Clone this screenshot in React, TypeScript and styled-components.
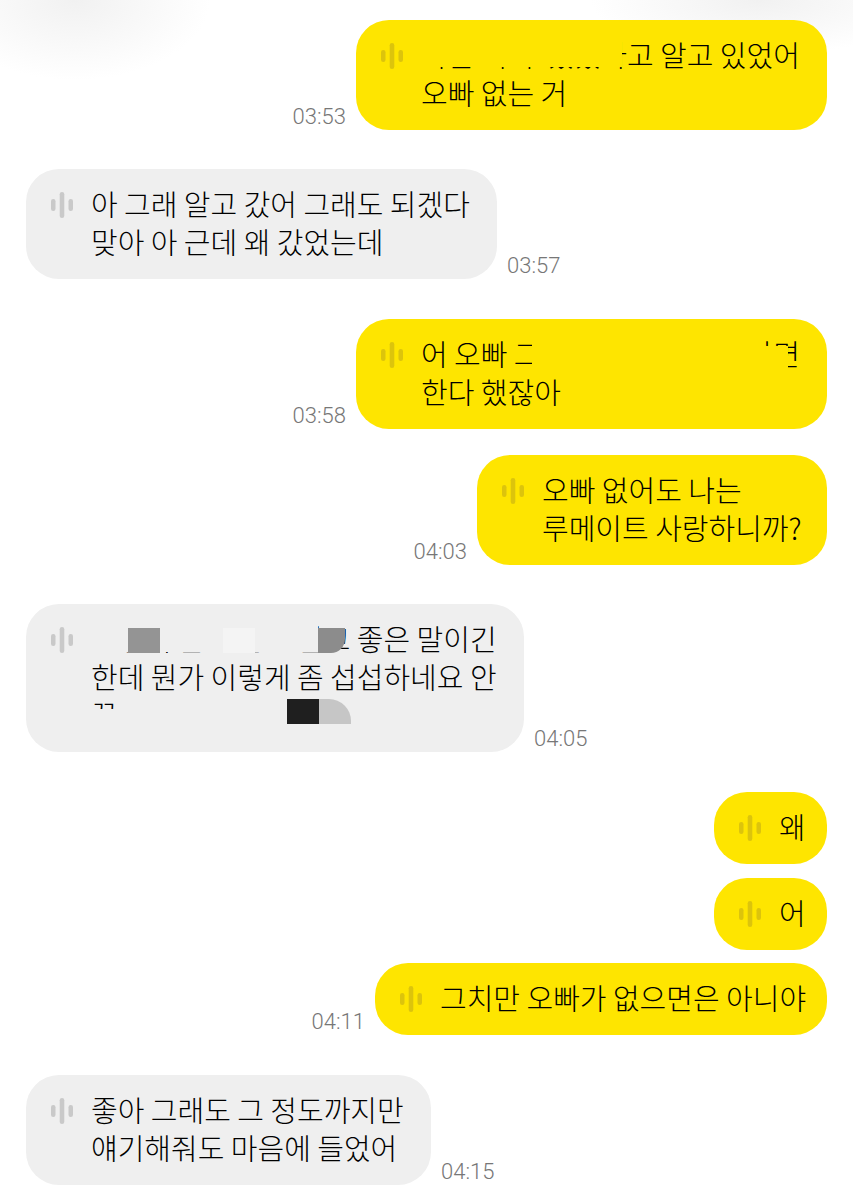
import React from "react";
import styled, { createGlobalStyle } from "styled-components";

const GlobalStyle = createGlobalStyle`
  html, body {
    margin: 0;
    padding: 0;
    background: #fff;
  }
`;

type Cover = {
  left: number;
  top: number;
  width: number;
  height: number;
  color: string;
  radius?: string;
};

type Message = {
  mine: boolean;
  width: number;
  gap: number;
  lines: string[];
  time?: string;
  covers?: Cover[];
};

const YELLOW = "#fee500";
const GRAY = "#efefef";

const messages: Message[] = [
  {
    mine: true,
    width: 471,
    gap: 0,
    lines: ["나는 거기  있었다고 알고 있었어", "오빠 없는 거"],
    time: "03:53",
    covers: [{ left: 62, top: 20, width: 204, height: 27, color: YELLOW }],
  },
  {
    mine: false,
    width: 471,
    gap: 39,
    lines: ["아 그래 알고 갔어 그래도 되겠다", "맞아 아 근데 왜 갔었는데"],
    time: "03:57",
  },
  {
    mine: true,
    width: 471,
    gap: 40,
    lines: ["어 오빠 그때 내가 없어도 된다면", "한다 했잖아"],
    time: "03:58",
    covers: [
      { left: 176, top: 14, width: 232, height: 36, color: YELLOW },
      { left: 408, top: 27, width: 24, height: 23, color: YELLOW },
    ],
  },
  {
    mine: true,
    width: 350,
    gap: 26,
    lines: ["오빠 없어도 나는", "루메이트 사랑하니까?"],
    time: "04:03",
  },
  {
    mine: false,
    width: 498,
    gap: 39,
    lines: ["그렇게 말해 참 고맙고 좋은 말이긴", "한데 뭔가 이렇게 좀 섭섭하네요 안", "꼭 그렇게 말하지 않아도"],
    time: "04:05",
    covers: [
      { left: 60, top: 20, width: 232, height: 28, color: GRAY },
      { left: 60, top: 105, width: 300, height: 34, color: GRAY },
      { left: 92, top: 95, width: 268, height: 44, color: GRAY },
      { left: 102, top: 24, width: 32, height: 25, color: "#949494" },
      { left: 197, top: 24, width: 32, height: 25, color: "#f4f4f4" },
      { left: 292, top: 24, width: 27, height: 25, color: "#8c8c8c", radius: "0 0 14px 0" },
      { left: 261, top: 95, width: 32, height: 25, color: "#1f1f1f" },
      { left: 293, top: 95, width: 32, height: 25, color: "#c6c6c6", radius: "0 22px 0 0" },
    ],
  },
  { mine: true, width: 113, gap: 40, lines: ["왜"] },
  { mine: true, width: 113, gap: 14, lines: ["어"] },
  {
    mine: true,
    width: 452,
    gap: 13,
    lines: ["그치만 오빠가 없으면은 아니야"],
    time: "04:11",
  },
  {
    mine: false,
    width: 405,
    gap: 40,
    lines: ["좋아 그래도 그 정도까지만", "얘기해줘도 마음에 들었어"],
    time: "04:15",
  },
];

const VoiceIcon: React.FC<{ color: string }> = ({ color }) => (
  <IconBox width="22" height="26" viewBox="0 0 22 26" fill={color}>
    <rect x="0" y="7" width="4.5" height="12" rx="2.2" />
    <rect x="8.7" y="0" width="4.6" height="26" rx="2.3" />
    <rect x="17.5" y="7" width="4.5" height="12" rx="2.2" />
  </IconBox>
);

const App: React.FC = () => {
  return (
    <Page>
      <GlobalStyle />
      <Glow $left={-60} $width={270} $height={160} />
      <Glow $left={590} $width={340} $height={110} />
      {messages.map((message, index) => (
        <Row key={index} $mine={message.mine} $gap={message.gap}>
          {message.mine && message.time && <Time>{message.time}</Time>}
          <Bubble $mine={message.mine} $width={message.width}>
            <VoiceIcon color={message.mine ? "#dcc40c" : "#c9c9c9"} />
            <TextBlock>
              {message.lines.map((line) => (
                <Line key={line}>{line}</Line>
              ))}
            </TextBlock>
            {message.covers?.map((cover, i) => (
              <Patch
                key={i}
                $left={cover.left}
                $top={cover.top}
                $width={cover.width}
                $height={cover.height}
                $color={cover.color}
                $radius={cover.radius}
              />
            ))}
          </Bubble>
          {!message.mine && message.time && <Time>{message.time}</Time>}
        </Row>
      ))}
    </Page>
  );
};

const Page = styled.div`
  position: relative;
  display: flex;
  flex-direction: column;
  width: 853px;
  height: 1200px;
  padding: 20px 26px 0 26px;
  box-sizing: border-box;
  overflow: hidden;
  background: #fff;
  font-family: "Noto Sans CJK KR", "Noto Sans", sans-serif;
`;

const Glow = styled.div<{ $left: number; $width: number; $height: number }>`
  position: absolute;
  top: ${(p) => -p.$height / 2}px;
  left: ${(p) => p.$left}px;
  width: ${(p) => p.$width}px;
  height: ${(p) => p.$height}px;
  background: radial-gradient(closest-side, #f1f1f1 0%, #f8f8f8 50%, rgba(255, 255, 255, 0) 100%);
`;

const Row = styled.div<{ $mine: boolean; $gap: number }>`
  position: relative;
  display: flex;
  align-items: flex-end;
  justify-content: ${(p) => (p.$mine ? "flex-end" : "flex-start")};
  gap: 10px;
  margin-top: ${(p) => p.$gap}px;
`;

const Bubble = styled.div<{ $mine: boolean; $width: number }>`
  position: relative;
  display: flex;
  align-items: flex-start;
  gap: 18.5px;
  width: ${(p) => p.$width}px;
  padding: 15px 0 19px 24.5px;
  box-sizing: border-box;
  border-radius: 33px;
  background: ${(p) => (p.$mine ? YELLOW : GRAY)};
`;

const IconBox = styled.svg`
  flex-shrink: 0;
  margin-top: 8px;
`;

const TextBlock = styled.div`
  display: flex;
  flex-direction: column;
`;

const Line = styled.div`
  height: 38px;
  font-size: 29px;
  font-weight: 200;
  line-height: 38px;
  color: #000;
  white-space: pre;
`;

const Patch = styled.div<{
  $left: number;
  $top: number;
  $width: number;
  $height: number;
  $color: string;
  $radius?: string;
}>`
  position: absolute;
  left: ${(p) => p.$left}px;
  top: ${(p) => p.$top}px;
  width: ${(p) => p.$width}px;
  height: ${(p) => p.$height}px;
  background: ${(p) => p.$color};
  border-radius: ${(p) => p.$radius ?? "0"};
`;

const Time = styled.div`
  font-family: Roboto, "Noto Sans", sans-serif;
  font-size: 22px;
  font-weight: 300;
  line-height: 26px;
  color: #777;
  white-space: nowrap;
`;

export default App;
